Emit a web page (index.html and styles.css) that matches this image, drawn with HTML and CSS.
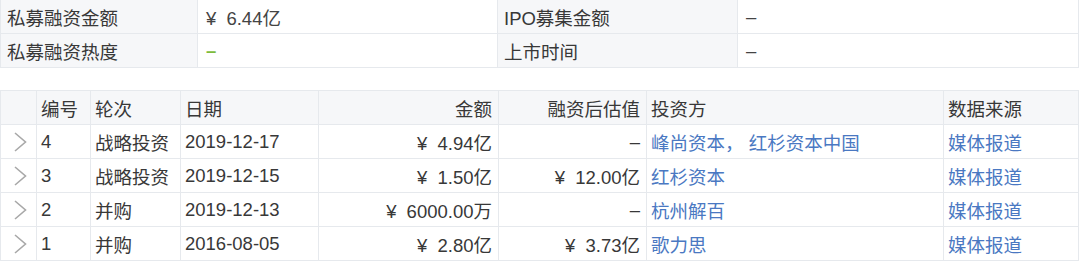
FILE: index.html
```html
<!DOCTYPE html>
<html lang="zh-CN">
  <head>
    <meta charset="UTF-8" />
    <meta name="viewport" content="width=device-width, initial-scale=1.0" />
    <title>融资信息</title>
    <link rel="stylesheet" href="styles.css">
  </head>
  <body>
    <table class="info">
      <colgroup>
        <col style="width: 197px" />
        <col style="width: 300px" />
        <col style="width: 240px" />
        <col />
      </colgroup>
      <tr>
        <th>私募融资金额</th>
        <td><span class="yen">¥</span> 6.44亿</td>
        <th>IPO募集金额</th>
        <td>–</td>
      </tr>
      <tr>
        <th>私募融资热度</th>
        <td><span class="heat">–</span></td>
        <th>上市时间</th>
        <td>–</td>
      </tr>
    </table>

    <table class="rounds">
      <colgroup>
        <col style="width: 36px" />
        <col style="width: 54px" />
        <col style="width: 90px" />
        <col style="width: 138px" />
        <col style="width: 180px" />
        <col style="width: 148px" />
        <col style="width: 297px" />
        <col />
      </colgroup>
      <thead>
        <tr>
          <th></th>
          <th>编号</th>
          <th>轮次</th>
          <th>日期</th>
          <th class="num">金额</th>
          <th class="num">融资后估值</th>
          <th>投资方</th>
          <th>数据来源</th>
        </tr>
      </thead>
      <tbody>
        <tr>
          <td class="arrow"><svg width="14" height="20" viewBox="0 0 14 20"><polyline points="2,1 12.5,10 2,19" /></svg></td>
          <td>4</td>
          <td>战略投资</td>
          <td>2019-12-17</td>
          <td class="num"><span class="yen">¥</span> 4.94亿</td>
          <td class="num">–</td>
          <td class="link">峰尚资本， 红杉资本中国</td>
          <td class="link">媒体报道</td>
        </tr>
        <tr>
          <td class="arrow"><svg width="14" height="20" viewBox="0 0 14 20"><polyline points="2,1 12.5,10 2,19" /></svg></td>
          <td>3</td>
          <td>战略投资</td>
          <td>2019-12-15</td>
          <td class="num"><span class="yen">¥</span> 1.50亿</td>
          <td class="num"><span class="yen">¥</span> 12.00亿</td>
          <td class="link">红杉资本</td>
          <td class="link">媒体报道</td>
        </tr>
        <tr>
          <td class="arrow"><svg width="14" height="20" viewBox="0 0 14 20"><polyline points="2,1 12.5,10 2,19" /></svg></td>
          <td>2</td>
          <td>并购</td>
          <td>2019-12-13</td>
          <td class="num"><span class="yen">¥</span> 6000.00万</td>
          <td class="num">–</td>
          <td class="link">杭州解百</td>
          <td class="link">媒体报道</td>
        </tr>
        <tr>
          <td class="arrow"><svg width="14" height="20" viewBox="0 0 14 20"><polyline points="2,1 12.5,10 2,19" /></svg></td>
          <td>1</td>
          <td>并购</td>
          <td>2016-08-05</td>
          <td class="num"><span class="yen">¥</span> 2.80亿</td>
          <td class="num"><span class="yen">¥</span> 3.73亿</td>
          <td class="link">歌力思</td>
          <td class="link">媒体报道</td>
        </tr>
      </tbody>
    </table>
  </body>
</html>
```

FILE: styles.css
```css
* {
  padding: 0;
  margin: 0;
  box-sizing: border-box;
}
body {
  background-color: white;
  color: #383838;
  font-family: "Liberation Sans", "Noto Sans CJK SC", sans-serif;
  font-size: 18.5px;
}
table {
  width: 1079px;
  table-layout: fixed;
  border-collapse: collapse;
}
th,
td {
  height: 34px;
  border: 1px solid #e6e9ed;
  font-weight: normal;
  text-align: left;
  white-space: nowrap;
  overflow: hidden;
  vertical-align: middle;
}
.yen {
  margin-right: 5px;
}
.info {
  margin-top: -1px;
}
.info th {
  background-color: #f6f7f9;
  padding: 0 6px;
}
.info td {
  padding: 0 8px;
  color: #444;
}
.heat {
  color: #7dbb3c;
  font-weight: bold;
}
.rounds {
  margin-top: 22px;
}
.rounds th {
  background-color: #f6f7f9;
  padding: 0 4px;
}
.rounds td {
  padding: 0 4px;
}
.rounds .num {
  text-align: right;
  padding-right: 6px;
}
.rounds .link {
  color: #4a78c2;
}
.arrow {
  text-align: center;
}
.arrow svg {
  display: block;
  margin: 0 auto;
  position: relative;
  left: 1px;
}
.arrow polyline {
  fill: none;
  stroke: #a8a8a8;
  stroke-width: 1.6;
}
```
